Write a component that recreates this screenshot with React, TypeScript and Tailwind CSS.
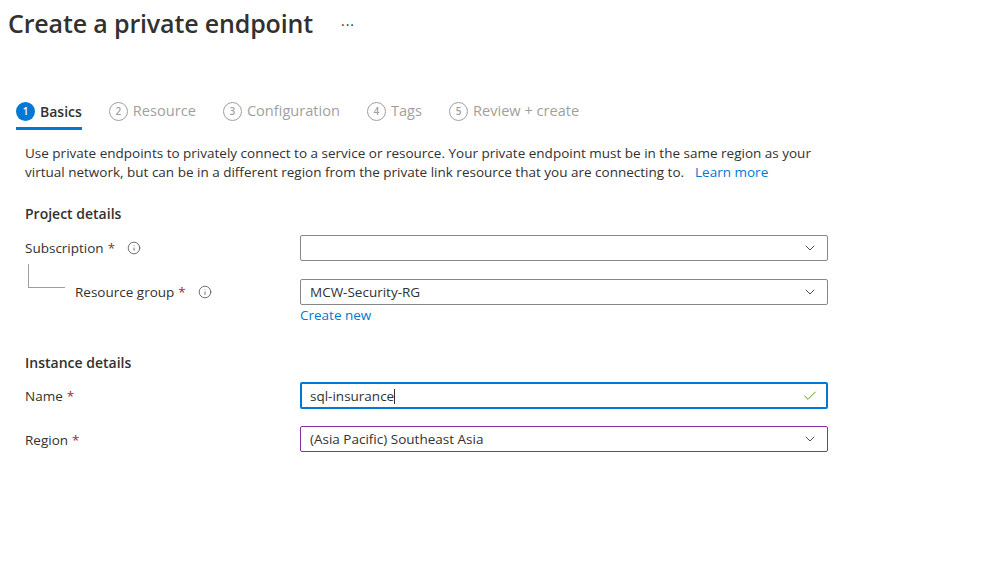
import { ChevronDown, Check, Info } from "lucide-react";

const steps = ["Basics", "Resource", "Configuration", "Tags", "Review + create"];

const Req = () => <span className="text-[#a4262c] ml-1">*</span>;

const InfoIcon = () => (
  <Info className="ml-3 h-[14px] w-[14px] text-[#605e5c]" strokeWidth={1.5} />
);

function Select({ value, className }: { value?: string; className?: string }) {
  return (
    <div
      className={`flex h-[26px] w-[528px] items-center justify-between rounded-[2px] border px-[9px] ${className ?? "border-[#8a8886]"}`}
    >
      <span className="text-[13.5px] text-[#323130]">{value}</span>
      <ChevronDown className="h-4 w-4 text-[#323130]" strokeWidth={1.3} />
    </div>
  );
}

export default function App() {
  return (
    <div className="min-h-[581px] w-[997px] bg-white font-['Open_Sans',sans-serif] text-[#323130]">
      <div className="flex items-center pl-2 pt-[5px]">
        <h1 className="text-[25px] font-semibold leading-[36px] tracking-[-0.15px]">
          Create a private endpoint
        </h1>
        <span className="ml-7 mt-[2px] text-[14px] tracking-[1px]">···</span>
      </div>

      <ul className="mt-[56px] flex gap-[27px] pl-4">
        {steps.map((s, i) => (
          <li
            key={s}
            className={`flex h-[33px] items-center gap-[5px] border-b-[3px] pb-[2px] ${i === 0 ? "border-[#0078d4]" : "border-transparent"}`}
          >
            <span
              className={`flex h-[19px] w-[19px] items-center justify-center rounded-full text-[10px] font-semibold ${i === 0 ? "bg-[#0078d4] text-white" : "border border-[#a19f9d] text-[#a19f9d]"}`}
            >
              {i + 1}
            </span>
            <span
              className={`${i === 0 ? "text-[14px] font-semibold text-[#323130]" : "text-[14.6px] text-[#a19f9d]"}`}
            >
              {s}
            </span>
          </li>
        ))}
      </ul>

      <div className="pl-[25px]">
        <div className="mt-[14px] flex flex-col text-[13.5px] leading-[19px]">
          <span>
            Use private endpoints to privately connect to a service or resource. Your private
            endpoint must be in the same region as your
          </span>
          <div className="flex">
            <span>
              virtual network, but can be in a different region from the private link resource that
              you are connecting to.
            </span>
            <a className="ml-[11px] text-[#0078d4]">Learn more</a>
          </div>
        </div>

        <h2 className="mt-[21px] text-[14px] font-semibold">Project details</h2>

        <div className="mt-[11px] grid grid-cols-[275px_528px] items-center">
          <div className="flex items-center text-[13.5px]">
            Subscription
            <Req />
            <InfoIcon />
          </div>
          <Select />
        </div>

        <div className="mt-[18px] grid grid-cols-[275px_528px]">
          <div className="flex items-start">
            <div className="ml-[3px] mt-[-15px] h-[24px] w-[37px] border-b border-l border-[#a19f9d]" />
            <div className="ml-[10px] flex h-[26px] items-center text-[13.5px]">
              Resource group
              <Req />
              <InfoIcon />
            </div>
          </div>
          <div>
            <Select value="MCW-Security-RG" />
            <div className="mt-0 text-[13.5px] text-[#0078d4]">Create new</div>
          </div>
        </div>

        <h2 className="mt-[27px] text-[14px] font-semibold">Instance details</h2>

        <div className="mt-[9px] grid grid-cols-[275px_528px] items-center">
          <div className="pt-[1px] text-[13.5px]">
            Name
            <Req />
          </div>
          <div className="flex h-[27px] items-center justify-between rounded-[2px] border-2 border-[#0078d4] px-[8px]">
            <span className="text-[13.5px]">
              sql-insurance<span className="inline-block h-[15px] w-px translate-y-[3px] bg-[#323130]" />
            </span>
            <Check className="h-4 w-4 text-[#57a300]" strokeWidth={1.5} />
          </div>
        </div>

        <div className="mt-[17px] grid grid-cols-[275px_528px] items-center">
          <div className="pt-[1px] text-[13.5px]">
            Region
            <Req />
          </div>
          <Select value="(Asia Pacific) Southeast Asia" className="border-[#8a2da5]" />
        </div>
      </div>
    </div>
  );
}
